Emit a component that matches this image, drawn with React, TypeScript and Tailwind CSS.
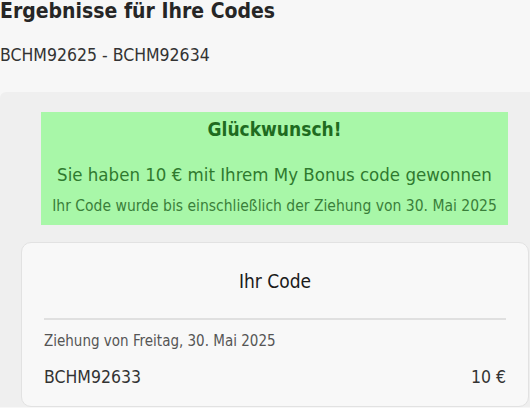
export default function App() {
  return (
    <div className="min-h-screen overflow-hidden bg-[#f7f7f7] font-['DejaVu_Sans_Condensed','Liberation_Sans_Narrow',Roboto,sans-serif] text-[#2b2b2b]">
      <h1 className="text-[21px] font-bold leading-[22px] text-[#262626]">Ergebnisse für Ihre Codes</h1>
      <p className="mt-[22px] text-[17.5px] leading-[22px] text-[#333]">BCHM92625 - BCHM92634</p>

      <div className="mt-[26px] rounded-tl-md bg-[#efefef] pt-5 pl-[21px] pr-[1px]">
        <div className="ml-5 mr-[21px] bg-[#a8f7a8] pt-[5px] pb-[9px] text-center">
          <h2 className="text-[19px] font-bold leading-[24px] text-[#1f6b1f]">Glückwunsch!</h2>
          <p className="mt-[22px] text-[18.5px] leading-[24px] text-[#2f7a2f]">
            Sie haben 10 € mit Ihrem My Bonus code gewonnen
          </p>
          <p className="mt-[9px] text-[15.5px] leading-[20px] text-[#3a7f3a]">
            Ihr Code wurde bis einschließlich der Ziehung von 30. Mai 2025
          </p>
        </div>

        <div className="mt-[17px] rounded-[10px] border border-[#e2e2e2] bg-[#f8f8f8] pl-[22px] pr-[22px] pb-[18px]">
          <h3 className="pt-[26px] pb-[25px] text-center text-[19px] leading-[24px] text-[#1a1a1a]">
            Ihr Code
          </h3>
          <div className="h-[2px] bg-[#e0e0e0]" />
          <p className="mt-[11px] text-[15px] leading-[20px] text-[#555]">
            Ziehung von Freitag, 30. Mai 2025
          </p>
          <div className="mt-[15px] flex items-center justify-between text-[17.5px] leading-[22px] text-[#333]">
            <span>BCHM92633</span>
            <span>10 €</span>
          </div>
        </div>
      </div>
    </div>
  );
}
